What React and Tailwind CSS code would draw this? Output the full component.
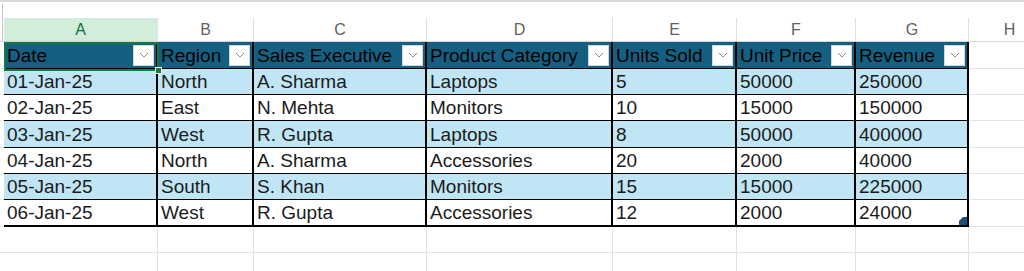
import React from 'react';

const columns = [
  { letter: 'A', label: 'Date', width: 'w-[154px]' },
  { letter: 'B', label: 'Region', width: 'w-[96px]' },
  { letter: 'C', label: 'Sales Executive', width: 'w-[173px]' },
  { letter: 'D', label: 'Product Category', width: 'w-[186px]' },
  { letter: 'E', label: 'Units Sold', width: 'w-[124px]' },
  { letter: 'F', label: 'Unit Price', width: 'w-[119px]' },
  { letter: 'G', label: 'Revenue', width: 'w-[113px]' },
];

const rows = [
  { h: 'h-[26px]', cells: ['01-Jan-25', 'North', 'A. Sharma', 'Laptops', '5', '50000', '250000'] },
  { h: 'h-[26px]', cells: ['02-Jan-25', 'East', 'N. Mehta', 'Monitors', '10', '15000', '150000'] },
  { h: 'h-[27px]', cells: ['03-Jan-25', 'West', 'R. Gupta', 'Laptops', '8', '50000', '400000'] },
  { h: 'h-[26px]', cells: ['04-Jan-25', 'North', 'A. Sharma', 'Accessories', '20', '2000', '40000'] },
  { h: 'h-[26px]', cells: ['05-Jan-25', 'South', 'S. Khan', 'Monitors', '15', '15000', '225000'] },
  { h: 'h-[27px]', cells: ['06-Jan-25', 'West', 'R. Gupta', 'Accessories', '12', '2000', '24000'] },
];

const FilterButton = () => (
  <div className="w-[21px] h-[21px] shrink-0 bg-white border border-[#d6d6d6] flex items-center justify-center">
    <svg width="10" height="6" viewBox="0 0 10 6" fill="none">
      <polyline points="1,1 5,5 9,1" stroke="#8a8a8a" strokeWidth="1" />
    </svg>
  </div>
);

const LeftStrip = ({ line = 'border-[#e6e6e6]' }) => (
  <div className={`w-[4px] shrink-0 border-b ${line}`} />
);

export default function App() {
  return (
    <div className="w-[1024px] h-[271px] overflow-hidden bg-white font-['Liberation_Sans',Arial,sans-serif]">
      {/* top strip */}
      <div className="h-[18px] border-t-2 border-[#dadada] flex">
        <div className="w-[3px] mt-[2px] border-r border-[#c4c4c4]" />
      </div>

      {/* column letters */}
      <div className="flex h-[24px] border-b border-[#d6d6d6]">
        <div className="w-[4px] shrink-0">
          <div className="w-[3px] h-full border-r border-[#c4c4c4]" />
        </div>
        {columns.map((c) => (
          <div
            key={c.letter}
            className={`${c.width} shrink-0 flex items-center justify-center border-r border-[#e0e0e0] text-[16px] ${
              c.letter === 'A' ? 'bg-[#d2eedb] text-[#0f703b]' : 'text-[#616161]'
            }`}
          >
            {c.letter}
          </div>
        ))}
        <div className="w-[82px] shrink-0 flex items-center justify-center text-[16px] text-[#616161] border-r border-[#e0e0e0]">
          H
        </div>
      </div>

      {/* table header */}
      <div className="flex h-[27px]">
        <LeftStrip />
        {columns.map((c, i) => (
          <div
            key={c.label}
            className={`${c.width} shrink-0 relative flex items-center justify-between pl-[3px] pr-[2px] bg-[#156082] border-r-2 border-b border-black text-[19px] leading-none text-black whitespace-nowrap`}
          >
            <span>{c.label}</span>
            <FilterButton />
            {i === 0 && (
              <>
                <div className="absolute top-0 left-0 w-[155px] h-[29px] border-2 border-[#107c41] z-10 pointer-events-none" />
                <div className="absolute left-[151px] top-[25px] w-[7px] h-[7px] bg-[#107c41] border border-white z-20" />
              </>
            )}
          </div>
        ))}
        <div className="w-[82px] shrink-0 border-b border-r border-[#e2e2e2]" />
      </div>

      {/* data rows */}
      {rows.map((r, ri) => (
        <div key={ri} className={`flex ${r.h}`}>
          <LeftStrip />
          {r.cells.map((v, ci) => (
            <div
              key={ci}
              className={`${columns[ci].width} shrink-0 relative flex items-center pl-[3px] border-r-2 border-b border-black text-[19px] leading-none text-[#1b1b1b] whitespace-nowrap overflow-visible ${
                ri % 2 === 0 ? 'bg-[#c0e6f5]' : 'bg-white'
              } ${ri === rows.length - 1 ? 'border-b-2' : ''}`}
            >
              {v}
              {ri === rows.length - 1 && ci === 6 && (
                <svg className="absolute right-0 bottom-0" width="8" height="8" viewBox="0 0 8 8">
                  <polygon points="4,0 8,0 8,8 0,8 0,4" fill="#1f4e79" />
                </svg>
              )}
            </div>
          ))}
          <div className="w-[82px] shrink-0 border-b border-r border-[#e2e2e2]" />
        </div>
      ))}

      {/* empty rows */}
      {['h-[26px]', 'h-[26px]'].map((h, i) => (
        <div key={i} className={`flex ${h}`}>
          <LeftStrip />
          {columns.map((c) => (
            <div key={c.letter} className={`${c.width} shrink-0 border-r border-b border-[#e2e2e2]`} />
          ))}
          <div className="w-[82px] shrink-0 border-b border-r border-[#e2e2e2]" />
        </div>
      ))}
    </div>
  );
}
